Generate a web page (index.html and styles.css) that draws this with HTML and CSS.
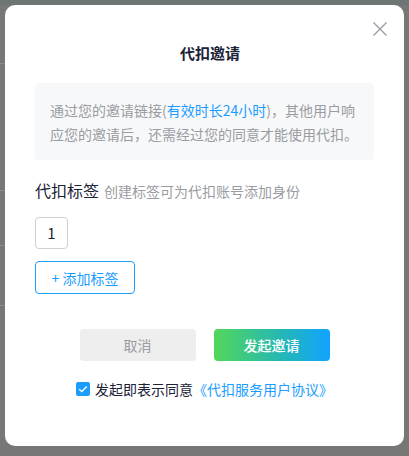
FILE: index.html
```html
<!DOCTYPE html>
<html lang="zh-CN">
<head>
    <meta charset="UTF-8">
    <meta name="viewport" content="width=device-width, initial-scale=1.0">
    <title>代扣邀请</title>
    <link rel="stylesheet" href="styles.css">
</head>
<body>
    <div class="backdrop">
        <div class="bg-line" style="top: 63px;"></div>
        <div class="bg-line" style="top: 190px;"></div>
        <div class="bg-line" style="top: 245px;"></div>
        <div class="bg-line" style="top: 305px;"></div>
    </div>

    <div class="modal">
        <button type="button" class="modal-close" aria-label="关闭">
            <svg width="16" height="16" viewBox="0 0 16 16">
                <path d="M1.5 1.5 L14.5 14.5 M14.5 1.5 L1.5 14.5" stroke="#9a9ca2" stroke-width="1.4" fill="none"/>
            </svg>
        </button>

        <h2 class="modal-title">代扣邀请</h2>

        <div class="notice">
            通过您的邀请链接(<span class="hl">有效时长24小时</span>)，其他用户响应您的邀请后，还需经过您的同意才能使用代扣。
        </div>

        <div class="tag-label">
            <span class="tag-label-main">代扣标签</span>
            <span class="tag-label-sub">创建标签可为代扣账号添加身份</span>
        </div>

        <div class="tag-list">
            <div class="tag-item">1</div>
        </div>

        <button type="button" class="add-tag">+ 添加标签</button>

        <div class="modal-actions">
            <button type="button" class="btn btn-cancel">取消</button>
            <button type="button" class="btn btn-primary">发起邀请</button>
        </div>

        <div class="agree">
            <span class="checkbox">
                <svg width="10" height="8" viewBox="0 0 10 8">
                    <path d="M1.2 4.2 L3.8 6.6 L8.8 1.4" stroke="#fff" stroke-width="1.4" fill="none"/>
                </svg>
            </span>
            <span class="agree-text">发起即表示同意</span><a class="agree-link" href="#">《代扣服务用户协议》</a>
        </div>
    </div>
</body>
</html>
```

FILE: styles.css
```css
* {
    box-sizing: border-box;
}
body {
    margin: 0;
    width: 409px;
    height: 456px;
    overflow: hidden;
    background-color: #757676;
    font-family: "Noto Sans CJK SC", "Noto Sans", sans-serif;
    position: relative;
}
.backdrop {
    position: absolute;
    inset: 0;
    background: linear-gradient(#6e7675 0, #6e7675 5px, #777 5px);
}
.bg-line {
    position: absolute;
    left: 0;
    width: 5px;
    height: 1px;
    background-color: #8a8a8a;
}
.modal {
    position: absolute;
    left: 5px;
    top: 5px;
    width: 399px;
    height: 441px;
    background-color: #fff;
    border-radius: 10px;
    padding: 35px 30px 0;
}
.modal-close {
    position: absolute;
    top: 16px;
    right: 16px;
    width: 16px;
    height: 16px;
    padding: 0;
    border: none;
    background: none;
    cursor: pointer;
}
.modal-close svg {
    display: block;
}
.modal-title {
    margin: 0;
    padding-left: 11px;
    text-align: center;
    font-size: 15px;
    line-height: 26px;
    font-weight: bold;
    color: #1b2237;
}
.notice {
    margin-top: 17px;
    padding: 15px 14px 14px 15px;
    background-color: #f7f8f9;
    border-radius: 4px;
    font-size: 14px;
    line-height: 24px;
    color: #9a9ca2;
}
.notice .hl {
    color: #1a9dff;
}
.tag-label {
    margin-top: 18px;
    line-height: 24px;
    display: flex;
    align-items: baseline;
}
.tag-label-main {
    font-size: 16px;
    color: #1b2237;
}
.tag-label-sub {
    margin-left: 5px;
    font-size: 14px;
    color: #9a9ca2;
}
.tag-list {
    margin-top: 14px;
    display: flex;
    gap: 8px;
}
.tag-item {
    width: 33px;
    height: 32px;
    border: 1px solid #cfd0d3;
    border-radius: 4px;
    text-align: center;
    line-height: 30px;
    font-size: 15px;
    color: #1b2237;
}
.add-tag {
    display: block;
    margin-top: 12px;
    width: 100px;
    height: 33px;
    padding: 0;
    border: 1px solid #1a9dff;
    border-radius: 4px;
    background: #fff;
    color: #1a9dff;
    font-family: inherit;
    font-size: 14px;
    cursor: pointer;
}
.modal-actions {
    margin-top: 35px;
    display: flex;
    justify-content: center;
    gap: 18px;
}
.btn {
    width: 116px;
    height: 32px;
    padding: 0;
    border: none;
    border-radius: 4px;
    font-family: inherit;
    font-size: 14px;
    cursor: pointer;
}
.btn-cancel {
    background-color: #eeeeee;
    color: #9a9ca2;
}
.btn-primary {
    background: linear-gradient(90deg, #52d75a 0%, #27b9b0 55%, #10a3ff 100%);
    color: #fff;
    font-weight: 500;
}
.agree {
    margin-top: 18px;
    display: flex;
    align-items: center;
    justify-content: center;
    font-size: 14px;
    line-height: 20px;
}
.checkbox {
    width: 14px;
    height: 14px;
    border-radius: 2px;
    background-color: #1a9dff;
    display: inline-flex;
    align-items: center;
    justify-content: center;
    margin-right: 5px;
}
.agree-text {
    color: #1b2237;
}
.agree-link {
    color: #1a9dff;
    text-decoration: none;
}
```
